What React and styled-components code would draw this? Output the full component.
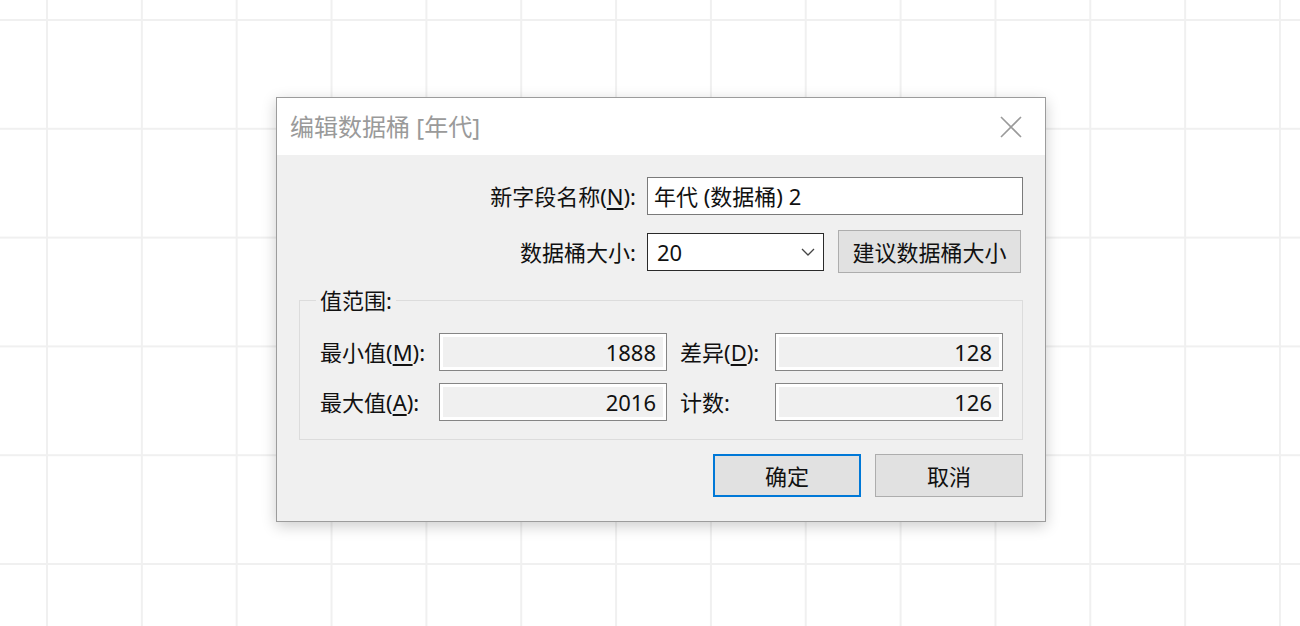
import React from "react";
import styled, { createGlobalStyle, css } from "styled-components";

const GlobalStyle = createGlobalStyle`
  html, body {
    margin: 0;
    padding: 0;
  }
  body {
    font-family: "Noto Sans", "Noto Sans CJK SC", sans-serif;
    color: #111;
  }
  * {
    box-sizing: border-box;
  }
`;

const uiFont = css`
  font-family: "Noto Sans", "Noto Sans CJK SC", sans-serif;
  font-size: 22px;
  line-height: 24px;
  color: #111;
`;

const Page = styled.div`
  width: 100%;
  min-height: 100vh;
  background-color: #fff;
  background-image: linear-gradient(to right, #f0f0f0 2px, transparent 2px),
    linear-gradient(to bottom, #f0f0f0 2px, transparent 2px);
  background-size: 94.85px 108.8px;
  background-position: 46px 19px;
  padding: 97px 0 0 276px;
  overflow: hidden;
`;

const Dialog = styled.div`
  width: 770px;
  border: 1px solid #9c9c9c;
  background: #f0f0f0;
  box-shadow: 0 4px 14px rgba(0, 0, 0, 0.2);
`;

const TitleBar = styled.div`
  height: 57px;
  background: #fff;
  display: flex;
  align-items: center;
  justify-content: space-between;
  padding: 0 22px 0 13px;
`;

const Title = styled.div`
  font-family: "Noto Sans", "Noto Sans CJK SC", sans-serif;
  font-size: 24px;
  line-height: 28px;
  color: #9a9a9a;
`;

const CloseButton = styled.button`
  width: 24px;
  height: 24px;
  padding: 0;
  border: none;
  background: transparent;
  display: flex;
  align-items: center;
  justify-content: center;
`;

const Body = styled.div`
  padding: 22px 22px 24px 22px;
`;

const FormGrid = styled.div`
  display: grid;
  grid-template-columns: 1fr 376px;
  column-gap: 11px;
  row-gap: 15px;
  align-items: center;
`;

const RowLabel = styled.label`
  ${uiFont}
  text-align: right;
`;

const TextInput = styled.div`
  ${uiFont}
  height: 38px;
  border: 1px solid #7a7a7a;
  background: #fff;
  padding: 0 6px;
  display: flex;
  align-items: center;
`;

const ControlRow = styled.div`
  display: flex;
  align-items: center;
  gap: 14px;
`;

const Select = styled.div`
  ${uiFont}
  width: 177px;
  height: 38px;
  border: 1px solid #2a2a2a;
  background: #fff;
  padding: 0 8px 0 9px;
  display: flex;
  align-items: center;
  justify-content: space-between;
`;

const Button = styled.button`
  ${uiFont}
  width: ${(p) => p.$width || 148}px;
  height: 43px;
  background: #e1e1e1;
  border: ${(p) => (p.$primary ? "2px solid #0078d7" : "1px solid #adadad")};
  padding: 0;
  display: flex;
  align-items: center;
  justify-content: center;
`;

const Group = styled.fieldset`
  margin: 15px 0 0 0;
  border: 1px solid #dcdcdc;
  padding: 21px 19px 18px 20px;
`;

const Legend = styled.legend`
  ${uiFont}
  padding: 0 4px;
  margin-left: -4px;
`;

const RangeGrid = styled.div`
  display: grid;
  grid-template-columns: 106px 228px 82px 228px;
  column-gap: 13px;
  row-gap: 12px;
  align-items: center;
`;

const FieldLabel = styled.label`
  ${uiFont}
  white-space: nowrap;
`;

const ReadOnlyField = styled.div`
  ${uiFont}
  height: 38px;
  border: 1px solid #858585;
  background: #f0f0f0;
  box-shadow: inset 0 0 0 3px #fff;
  padding: 0 10px;
  display: flex;
  align-items: center;
  justify-content: flex-end;
`;

const Footer = styled.div`
  display: flex;
  justify-content: flex-end;
  gap: 14px;
  margin-top: 14px;
`;

const Key = styled.span`
  text-decoration: underline;
  text-underline-offset: 3px;
`;

const CloseIcon = () => (
  <svg width="22" height="22" viewBox="0 0 22 22">
    <path d="M1 1 L21 21 M21 1 L1 21" stroke="#9a9a9a" strokeWidth="1.6" fill="none" />
  </svg>
);

const Chevron = () => (
  <svg width="14" height="8" viewBox="0 0 14 8">
    <path d="M1 1 L7 7 L13 1" stroke="#444" strokeWidth="1.3" fill="none" />
  </svg>
);

const Mnemonic = ({ text, k }) => (
  <>
    {text}(<Key>{k}</Key>):
  </>
);

export default function App() {
  const range = [
    { label: <Mnemonic text="最小值" k="M" />, value: "1888" },
    { label: <Mnemonic text="差异" k="D" />, value: "128" },
    { label: <Mnemonic text="最大值" k="A" />, value: "2016" },
    { label: "计数:", value: "126" },
  ];

  return (
    <Page>
      <GlobalStyle />
      <Dialog>
        <TitleBar>
          <Title>编辑数据桶 [年代]</Title>
          <CloseButton>
            <CloseIcon />
          </CloseButton>
        </TitleBar>
        <Body>
          <FormGrid>
            <RowLabel>
              <Mnemonic text="新字段名称" k="N" />
            </RowLabel>
            <TextInput>年代 (数据桶) 2</TextInput>
            <RowLabel>数据桶大小:</RowLabel>
            <ControlRow>
              <Select>
                <span>20</span>
                <Chevron />
              </Select>
              <Button $width={183}>建议数据桶大小</Button>
            </ControlRow>
          </FormGrid>
          <Group>
            <Legend>值范围:</Legend>
            <RangeGrid>
              {range.map((item, index) => (
                <React.Fragment key={index}>
                  <FieldLabel>{item.label}</FieldLabel>
                  <ReadOnlyField>{item.value}</ReadOnlyField>
                </React.Fragment>
              ))}
            </RangeGrid>
          </Group>
          <Footer>
            <Button $primary>确定</Button>
            <Button>取消</Button>
          </Footer>
        </Body>
      </Dialog>
    </Page>
  );
}
